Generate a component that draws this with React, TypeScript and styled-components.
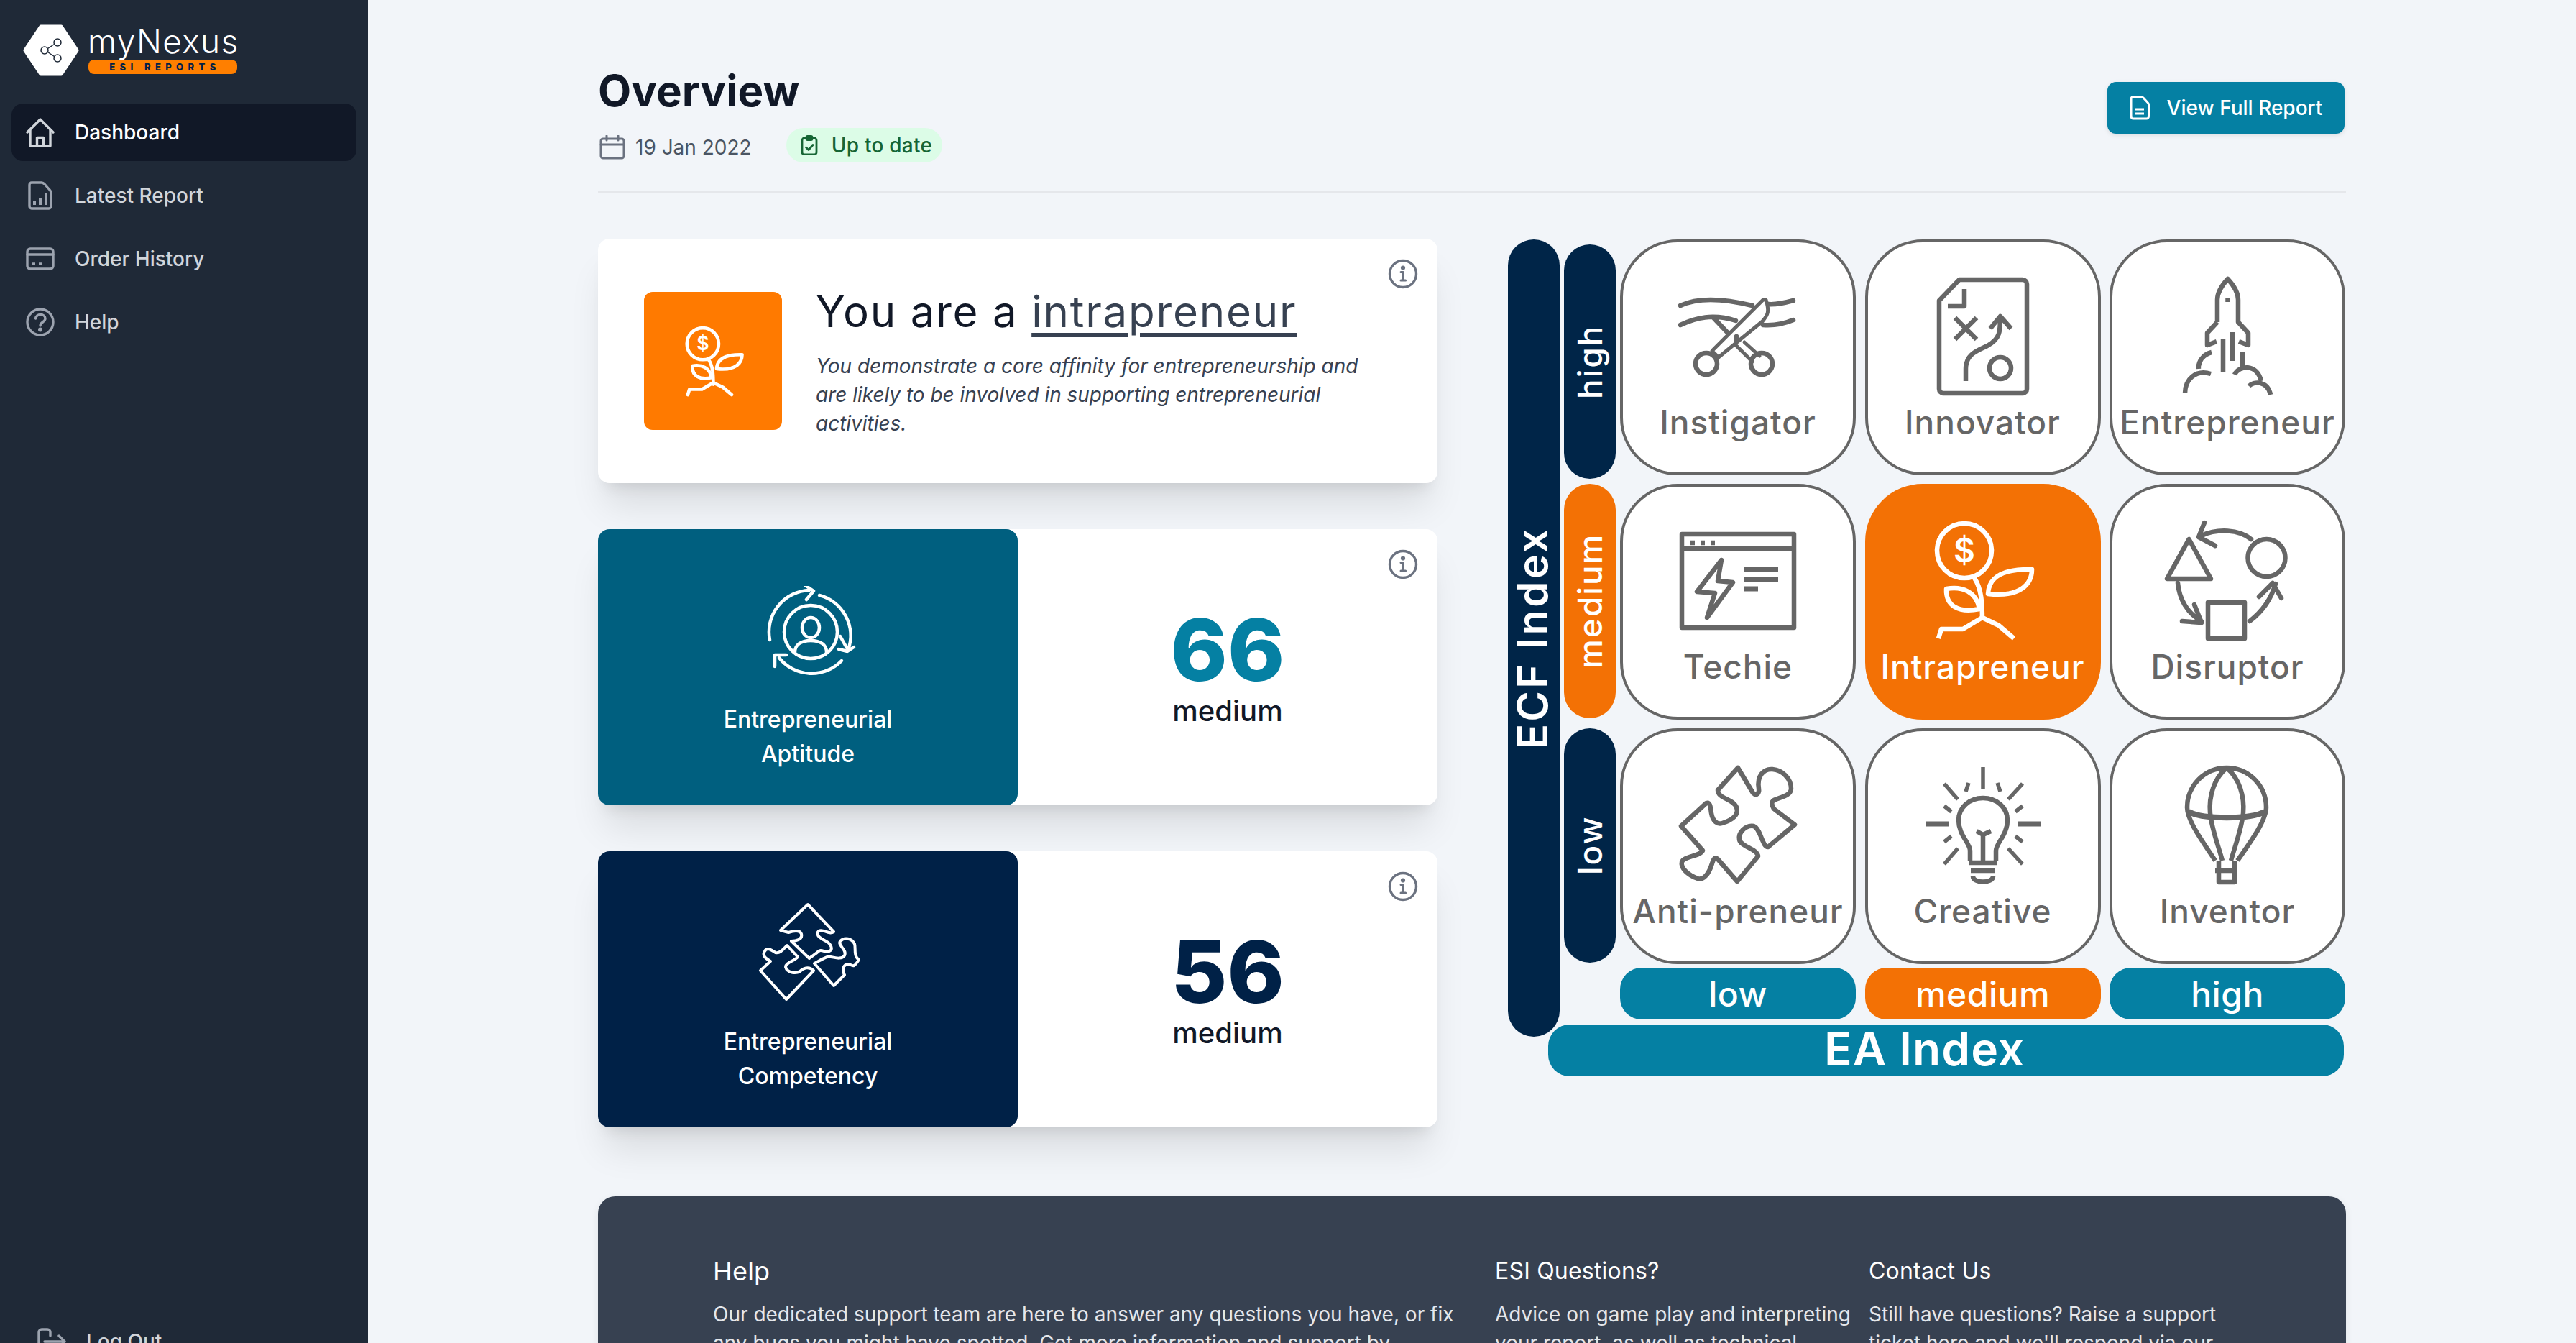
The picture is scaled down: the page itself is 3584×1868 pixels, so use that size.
import React from "react";
import styled, { createGlobalStyle } from "styled-components";

const Global = createGlobalStyle`
  html, body { margin: 0; padding: 0; height: 100%; overflow: hidden; background: #f2f5f9; }
  body { font-family: Inter, "Noto Sans", sans-serif; -webkit-font-smoothing: antialiased; }
  #root { height: 1868px; overflow: hidden; }
  * { box-sizing: border-box; }
`;

const Layout = styled.div`display: flex; height: 1868px; overflow: hidden;`;
const Sidebar = styled.aside`
  width: 512px; flex: none; height: 1886px; background: #1f2937;
  display: flex; flex-direction: column; padding: 34px 16px 0;
`;
const Logo = styled.div`display: flex; align-items: flex-start; gap: 12px; padding-left: 16px; height: 110px;`;
const LogoWords = styled.div`display: flex; flex-direction: column; width: 210px;`;
const LogoName = styled.div`
  font-size: 46px; font-weight: 300; line-height: 46px; color: #fff; letter-spacing: 1.4px; height: 49px; white-space: nowrap;
`;
const LogoTag = styled.div`
  height: 20px; width: 207px; margin-left: 1px; background: #ff7f00; border-radius: 8px; color: #002147; font-size: 13px; font-weight: 800;
  letter-spacing: 6.4px; line-height: 21px; text-align: center; white-space: pre; padding-left: 6px;
`;
const Nav = styled.nav`display: flex; flex-direction: column; gap: 8px;`;
const NavItem = styled.a<{ $active?: boolean }>`
  height: 80px; border-radius: 16px; display: flex; align-items: center; gap: 28px; padding-left: 20px;
  font-size: 28px; font-weight: 500; color: ${(p) => (p.$active ? "#fff" : "#d1d5db")};
  background: ${(p) => (p.$active ? "#111827" : "transparent")};
  svg { color: ${(p) => (p.$active ? "#d1d5db" : "#9ca3af")}; flex: none; }
`;
const LogOut = styled.a`
  margin-top: auto; display: flex; align-items: center; gap: 28px; padding-left: 36px; height: 40px;
  font-size: 28px; font-weight: 500; color: #d1d5db; svg { color: #9ca3af; flex: none; }
`;
const Main = styled.main`flex: 1; min-width: 0; padding: 90px 320px 0;`;
const Header = styled.header`
  display: flex; justify-content: space-between; align-items: flex-start; padding-bottom: 40px; border-bottom: 2px solid #e5e7eb;
`;
const Title = styled.h1`margin: 0; font-size: 60px; line-height: 72px; font-weight: 700; color: #111827;`;
const Meta = styled.div`display: flex; align-items: center; margin-top: 16px; height: 48px;`;
const DateText = styled.span`
  display: flex; align-items: center; gap: 14px; margin-left: 2px; font-size: 28px; color: #4b5563; padding-top: 5px;
  svg { color: #6b7280; }
`;
const Badge = styled.span`
  margin-left: 48px; height: 48px; border-radius: 24px; padding: 0 14px 0 20px; display: flex; align-items: center; gap: 19px;
  background: #dcfce7; color: #166534; font-size: 28px; font-weight: 500; letter-spacing: .25px;
`;
const ReportButton = styled.a`
  margin: 24px 2px 0 0; width: 330px; height: 72px; border-radius: 12px; background: #0580a3; color: #fff; display: flex; align-items: center;
  justify-content: center; gap: 24px; font-size: 28px; font-weight: 500; box-shadow: 0 2px 6px rgba(0,0,0,.1);
`;
const Columns = styled.div`display: flex; gap: 98px; margin-top: 64px;`;
const LeftColumn = styled.div`width: 1168px; flex: none; display: flex; flex-direction: column; gap: 64px;`;
const Card = styled.section`
  position: relative; background: #fff; border-radius: 16px; box-shadow: 0 40px 50px -10px rgba(0,0,0,.1), 0 16px 20px -12px rgba(0,0,0,.1);
`;
const InfoCorner = styled.span`position: absolute; top: 28px; right: 27px; display: flex; color: #6b7280;`;
const TypeCard = styled(Card)`height: 340px; display: flex; align-items: center; padding-left: 64px; gap: 47px;`;
const TypeIcon = styled.div`
  width: 192px; height: 192px; flex: none; background: #ff7a00; border-radius: 12px; color: #fff; display: flex; align-items: center; justify-content: center; padding-left: 6px;
`;
const TypeText = styled.div`padding-top: 6px; width: 770px;`;
const TypeTitle = styled.h2`margin: 0 0 24px; font-size: 60px; line-height: 64px; font-weight: 400; color: #111827; white-space: nowrap; letter-spacing: 1.8px;`;
const TypeLink = styled.a`color: #374151; text-decoration: underline; text-decoration-thickness: 6px; text-underline-offset: 8px;`;
const TypeDesc = styled.p`margin: 0; font-size: 28px; line-height: 40px; font-style: italic; color: #374151; letter-spacing: -.03px;`;
const ScoreCard = styled(Card)`height: 384px; display: flex;`;
const ScoreLeft = styled.div<{ $bg: string }>`
  width: 584px; flex: none; border-radius: 16px; background: ${(p) => p.$bg}; color: #fff; display: flex; flex-direction: column; align-items: center; padding-top: 76px;
`;
const ScoreIconBox = styled.div<{ $shiftX: number; $shiftY: number }>`
  height: 134px; display: flex; align-items: center; justify-content: center; margin-bottom: 31px;
  svg { transform: translate(${(p) => p.$shiftX}px, ${(p) => p.$shiftY}px); }
`;
const ScoreName = styled.div`font-size: 32px; line-height: 48px; font-weight: 500; text-align: center;`;
const ScoreRight = styled.div`flex: 1; display: flex; flex-direction: column; align-items: center; justify-content: center;`;
const ScoreValue = styled.div<{ $color: string }>`font-size: 120px; line-height: 120px; font-weight: 800; color: ${(p) => p.$color};`;
const ScoreLevel = styled.div`font-size: 40px; line-height: 48px; font-weight: 500; color: #111827; margin-top: 1px;`;

const Matrix = styled.div`display: flex; gap: 6px; align-items: flex-start; margin-top: 1px; width: 1166px; flex: none;`;
const EcfBar = styled.div`
  width: 72px; height: 1109px; flex: none; border-radius: 36px; background: #002548; color: #fff; display: flex; align-items: center; justify-content: center;
  font-size: 58px; font-weight: 600; writing-mode: vertical-rl; transform: rotate(180deg); white-space: nowrap; letter-spacing: 3.2px; padding-left: 4px;
`;
const MatrixBody = styled.div`display: flex; flex-direction: column; width: 1088px;`;
const Rows = styled.div`display: flex; flex-direction: column; gap: 12px;`;
const Row = styled.div`display: flex; gap: 6px; height: 328px;`;
const RowLabel = styled.div<{ $orange?: boolean; $drop?: number }>`
  width: 72px; height: 326px; flex: none; border-radius: 36px; margin-top: ${(p) => p.$drop ?? 0}px;
  background: ${(p) => (p.$orange ? "#f37105" : "#002548")}; color: #fff; display: flex; align-items: center; justify-content: center;
  font-size: 46px; font-weight: 500; writing-mode: vertical-rl; transform: rotate(180deg); letter-spacing: 2px;
`;
const Cells = styled.div`display: grid; grid-template-columns: repeat(3, 328px); column-gap: 12.5px;`;
const Cell = styled.div<{ $active?: boolean }>`
  height: 328px; border-radius: 80px; border: 4px solid ${(p) => (p.$active ? "#f37105" : "#666")};
  background: ${(p) => (p.$active ? "#f37105" : "#fff")}; color: ${(p) => (p.$active ? "#fff" : "#666")}; display: flex; flex-direction: column; align-items: center;
`;
const CellLabel = styled.div`font-size: 46px; line-height: 52px; font-weight: 500; white-space: nowrap; letter-spacing: 1px;`;
const GridIcon = styled.svg`
  display: block; width: 320px; height: 224px; flex: none; fill: none; stroke: currentColor; stroke-width: 6.5; stroke-linejoin: round;
`;
const Axis = styled.div`display: grid; grid-template-columns: repeat(3, 328px); column-gap: 12.5px; margin: 5px 0 0 78px;`;
const AxisLabel = styled.div<{ $orange?: boolean }>`
  height: 72px; border-radius: 30px; background: ${(p) => (p.$orange ? "#f37105" : "#0580a3")}; color: #fff;
  display: flex; align-items: center; justify-content: center; font-size: 48px; font-weight: 500; letter-spacing: .5px;
`;
const EaBar = styled.div`
  position: relative; margin: 7px 0 0 -22px; width: 1107px; height: 72px; border-radius: 30px; background: #0580a3; color: #fff;
  display: flex; align-items: center; justify-content: center; font-size: 64px; font-weight: 600; letter-spacing: 1px; padding: 0 60px 6px 0;
`;
const HelpPanel = styled.section`
  margin-top: 96px; background: #374151; border-radius: 24px 24px 0 0; padding: 82px 160px 0; height: 400px; color: #fff; box-shadow: 0 4px 12px rgba(0,0,0,.08);
  display: grid; grid-template-columns: 1072px 504px 504px; column-gap: 16px; align-items: start;
`;
const HelpHead = styled.h3<{ $large?: boolean }>`margin: 0 0 18px; height: 44px; font-size: ${(p) => (p.$large ? 36 : 32)}px; line-height: 44px; font-weight: 400; letter-spacing: .2px; color: #fff;`;
const HelpText = styled.p`margin: 0; font-size: 28px; line-height: 40px; color: #e5e7eb;`;

const StrokeSvg = styled.svg`fill: none; stroke: currentColor; stroke-linecap: round; stroke-linejoin: round; display: block;`;
const FillText = styled.text`fill: currentColor; stroke: none; font-family: Inter, sans-serif; font-weight: 600; text-anchor: middle;`;

const Info = () => (
  <InfoCorner>
    <StrokeSvg width={42} height={42} viewBox="0 0 42 42" strokeWidth={3.4}>
      <circle cx={21} cy={21} r={18.5} />
      <path d="M18 18.5h3.4v11.5M18 30h6.6" strokeWidth={3} />
      <circle cx={21} cy={12.5} r={1.4} fill="currentColor" />
    </StrokeSvg>
  </InfoCorner>
);

const HomeIcon = () => (
  <StrokeSvg width={40} height={42} viewBox="0 0 40 42" strokeWidth={3.4}>
    <path d="M2 21 20 3l18 18" /><path d="M6 18v22h28V18" /><path d="M15.5 40V28.5h9V40" />
  </StrokeSvg>
);
const ReportIcon = () => (
  <StrokeSvg width={40} height={40} viewBox="0 0 40 40" strokeWidth={3.4}>
    <path d="M8 2h14c2 0 3 1 4 2l7 8c1 1 2 2 2 4v19a3 3 0 0 1-3 3H8a3 3 0 0 1-3-3V5a3 3 0 0 1 3-3Z" />
    <path d="M12 33v-5M20 33V23M28 33V17" strokeWidth={4} strokeLinecap="butt" />
  </StrokeSvg>
);
const CardIcon = () => (
  <StrokeSvg width={40} height={40} viewBox="0 0 40 40" strokeWidth={3.4}>
    <rect x={2} y={6} width={36} height={28} rx={4} /><path d="M2 14h36" />
    <path d="M9 27h4M18 27h4" strokeWidth={3.6} strokeLinecap="butt" />
  </StrokeSvg>
);
const HelpIcon = () => (
  <StrokeSvg width={40} height={40} viewBox="0 0 40 40" strokeWidth={3.4}>
    <circle cx={20} cy={20} r={18} /><path d="M13.5 15c1-4 4-5.5 7-5.5 3.500 0 6.500 2.200 6.500 5.500 0 5-7 5-7 10" />
    <circle cx={20} cy={30.500} r={1.300} fill="currentColor" />
  </StrokeSvg>
);
const LogOutIcon = () => (
  <StrokeSvg width={40} height={40} viewBox="0 0 40 40" strokeWidth={3.4}>
    <path d="M18 28v5a4 4 0 0 1-4 4H6a4 4 0 0 1-4-4V7a4 4 0 0 1 4-4h8a4 4 0 0 1 4 4v5M10 20h28M30 12l8 8-8 8" />
  </StrokeSvg>
);
const CalendarIcon = () => (
  <StrokeSvg width={36} height={34} viewBox="0 0 36 34" strokeWidth={3}>
    <rect x={2} y={5} width={32} height={27} rx={3} /><path d="M10 1v6M26 1v6M2 13h32" />
  </StrokeSvg>
);
const ClipboardIcon = () => (
  <StrokeSvg width={24} height={28} viewBox="0 0 24 28" strokeWidth={2.8}>
    <rect x={2} y={4} width={20} height={23} rx={3} /><rect x={8} y={1.500} width={8} height={5} rx={1.500} /><path d="m7.500 17 3.500 3.500 6-7" />
  </StrokeSvg>
);
const DocIcon = () => (
  <StrokeSvg width={28} height={34} viewBox="0 0 28 34" strokeWidth={3}>
    <path d="M5 1.500h11c1 0 2 .5 3 1.500l6 6.500c1 1 1.500 2 1.500 3V29a3 3 0 0 1-3 3H5a3 3 0 0 1-3-3V4.500a3 3 0 0 1 3-3Z" />
    <path d="M8 19h12M8 25h12" strokeLinecap="butt" />
  </StrokeSvg>
);
const LogoMark = () => (
  <svg width={78} height={72} viewBox="0 0 78 72" style={{ flex: "none" }}>
    <path d="M25 3h28l22 33-22 33H25L3 36Z" fill="#fff" stroke="#fff" strokeWidth={5} strokeLinejoin="round" />
    <g fill="none" stroke="#1f2937" strokeWidth={1.500}>
      <circle cx={48} cy={25} r={5} /><circle cx={30} cy={36} r={5} /><circle cx={48} cy={47} r={5} />
      <path d="m34.500 33.500 9-6M34.500 38.500l9 6" />
    </g>
  </svg>
);

const SproutPaths = () => (
  <>
    <circle cx={138} cy={93} r={38} />
    <FillText x={138} y={109} fontSize={46}>$</FillText>
    <path d="M152 131c10 15 11 35 11 59" />
    <path d="M171 153c1-23 19-35 61-34 0 21-17 39-61 34Z" />
    <path d="M113 146c22-4 42 4 46 28-29 6-47-4-46-28Z" />
    <path d="M102 215l4-13h30l27-16 23 11 21 18" />
  </>
);
const AptitudeIcon = () => (
  <StrokeSvg width={128} height={128} viewBox="0 0 128 128" strokeWidth={4.500}>
    <path d="M7 75A58 58 0 0 1 62 6M56 -1 68 7l-10 12" />
    <path d="M76 7a58 58 0 0 1 40 76M114 80l-9-16M103 82l12 3 9-6" transform="translate(0 6)" />
    <path d="M107 104a58 58 0 0 1-87-4" />
    <path d="M14 112V96h16" />
    <circle cx={64} cy={64} r={37} />
    <ellipse cx={64} cy={58} rx={12} ry={14} />
    <path d="M42 92c0-10 8-16 22-16s22 6 22 16" />
  </StrokeSvg>
);
const CompetencyIcon = () => (
  <StrokeSvg width={142} height={137} viewBox="-2 -2 142 137" strokeWidth={4}>
    <path d="M67 1 103 39C96 44 88 34 82 38C76 44 88 50 92 52C100 56 102 64 97 66C92 70 86 62 82 66C78 70 74 72 69 76L44 52C50 52 60 50 58 42C56 36 46 38 40 40L29 37Z" />
    <path d="M1 93 37 133 75 93C68 86 60 90 56 94C50 98 38 96 36 88C36 82 48 80 53 74L38 58C34 62 28 70 22 68C16 64 10 60 7 66C3 72 8 76 15 80Z" />
    <path d="M76 83 103 114 118 99C114 92 116 84 124 84C130 86 130 90 138 78C130 72 134 62 132 56C128 48 118 46 112 52C108 58 122 64 118 72C112 80 100 72 94 74C88 76 82 80 76 83Z" />
  </StrokeSvg>
);

const box = "4 4 320 224";
const Instigator = () => (
  <GridIcon viewBox={box} strokeLinecap="round">
    <path d="M84 92c21-10 51-12 100 0M206 90c12 1 24-2 35-5M84 119c21-10 45-16 77-6M199 119c14 1 30-2 42-7M131 110l18 19" />
    <path d="M199 84h4c5 16 3 21-5 30l-61 50-9-9Z" strokeWidth={5} />
    <circle cx={120} cy={173} r={15} /><circle cx={197} cy={173} r={15} />
    <path d="m160 146 24 24M173 143l21 19" strokeWidth={5} />
    <path d="M162 135v6" />
  </GridIcon>
);
const Innovator = () => (
  <GridIcon viewBox={box}>
    <path d="M131 56h88a6 6 0 0 1 6 6v146a6 6 0 0 1-6 6H109a6 6 0 0 1-6-6V85Z" />
    <path d="M138 69v24h-23M125 109l30 30M155 109l-30 30M140 197v-17c0-20 15-25 30-32 18-10 18-20 18-40M174 124l14-17 15 17" />
    <circle cx={188} cy={179} r={15} />
  </GridIcon>
);
const Rocket = () => (
  <GridIcon viewBox={box} strokeWidth={5.500}>
    <path d="M150 115V84c0-12 8-22 14.500-29C171 62 179 72 179 84v31l14 15v17l-13-5M150 115l-14 15v17l13-5" />
    <path d="M164.500 81v6M158 139v46M171 129v40M185 156v26" />
    <path d="M105 214c0-19 15-34 36-27M142 157c-12 3-19 13-18 23M174 188c6-13 31-16 37 9M194 204c6-7 26-8 30 12" />
  </GridIcon>
);
const Techie = () => (
  <GridIcon viewBox={box}>
    <rect x={86} y={70} width={156} height={130} /><path d="M86 90h156M98 82h6M112 82h6M126 82h6" />
    <path d="M141 106 107 150l25 2-11 34 36-49-21-2Z" />
    <path d="M172 119h48M172 133h48M172 146h20" strokeWidth={7} />
  </GridIcon>
);
const Sprout = () => (
  <GridIcon viewBox={box} strokeWidth={5.500}><SproutPaths /></GridIcon>
);
const Disruptor = () => (
  <GridIcon viewBox={box} strokeLinecap="round">
    <path d="M110.500 77 80 132h61Z" /><circle cx={218.500} cy={103} r={26} />
    <rect x={137} y={165} width={51} height={50} />
    <path d="M197 77c-17-14-47-15-69-5M132 54l-8 20 23 12M95 138c2 22 13 42 33 53M101 191l27 2-10-25M195 191c17-13 30-31 36-52M208 157l19-19 12 21" />
  </GridIcon>
);
const Puzzle = () => (
  <GridIcon viewBox={box}>
    <path d="M164 55l21 35c5 5 9 0 8-6-3-18 7-28 19-27 14 1 26 13 26 27 0 10-16 12-24 16-5 3-2 8 0 12l29 22-37 31c-8 1-10-25-20-29-12-2-22 10-20 19 2 10 26 13 26 23l-29 35-27-31c-4-4-6 0-8 6-4 14-12 24-20 21-14-5-24-15-22-23 2-8 26-8 29-16l-30-34 35-32c6-2 6 8 7 14 2 12 9 16 15 14 14-4 24-12 20-22-4-12-26-12-26-24Z" />
  </GridIcon>
);
const Bulb = () => (
  <GridIcon viewBox={box}>
    <path d="M164 54v30M110 77l19 22M219 77l-20 22M144 76l-4 12M184 76l4 12M110 108l10 8M219 108l-10 8M110 158l10-8M219 158l-10-8M110 189l19-22M219 189l-20-22" strokeWidth={5.500} />
    <path d="M85 133h31M213 133h31" strokeWidth={7} />
    <path d="M146 184v-14c0-10-16-22-16-42 0-18 15-31 34-31s34 13 34 31c0 20-16 32-16 42v14" />
    <path d="m155 143 9 5 11-5M164 148v36M144 187h40M147 198h34M150 206c0 10 28 10 28 0" />
  </GridIcon>
);
const Balloon = () => (
  <GridIcon viewBox={box} strokeWidth={5.500}>
    <path d="M147 184c-12-19-39-54-39-74 0-30 24-55 55-55s55 25 55 55c0 20-27 55-40 74" />
    <path d="M110 116c20 11 86 11 106 0" strokeWidth={8} />
    <path d="M163 55c-18 15-25 40-23 63 2 22 12 47 17 66M163 55c18 15 25 40 23 63-2 22-12 47-17 66" />
    <path d="M147 198h31M152 184v30h22v-30" />
  </GridIcon>
);

const rows = [
  { label: "high", drop: 7, cells: [["Instigator", Instigator], ["Innovator", Innovator], ["Entrepreneur", Rocket]] },
  { label: "medium", orange: true, cells: [["Techie", Techie], ["Intrapreneur", Sprout, true], ["Disruptor", Disruptor]] },
  { label: "low", cells: [["Anti-preneur", Puzzle], ["Creative", Bulb], ["Inventor", Balloon]] },
] as const;

export default function App() {
  return (
    <>
      <Global />
      <Layout>
        <Sidebar>
          <Logo>
            <LogoMark />
            <LogoWords>
              <LogoName>myNexus</LogoName>
              <LogoTag>{"ESI REPORTS"}</LogoTag>
            </LogoWords>
          </Logo>
          <Nav>
            <NavItem $active><HomeIcon />Dashboard</NavItem>
            <NavItem><ReportIcon />Latest Report</NavItem>
            <NavItem><CardIcon />Order History</NavItem>
            <NavItem><HelpIcon />Help</NavItem>
          </Nav>
          <LogOut><LogOutIcon />Log Out</LogOut>
        </Sidebar>
        <Main>
          <Header>
            <div>
              <Title>Overview</Title>
              <Meta>
                <DateText><CalendarIcon />19 Jan 2022</DateText>
                <Badge><ClipboardIcon />Up to date</Badge>
              </Meta>
            </div>
            <ReportButton><DocIcon />View Full Report</ReportButton>
          </Header>
          <Columns>
            <LeftColumn>
              <TypeCard>
                <Info />
                <TypeIcon>
                  <StrokeSvg width={86} height={100} viewBox="95 48 145 172" strokeWidth={8}><SproutPaths /></StrokeSvg>
                </TypeIcon>
                <TypeText>
                  <TypeTitle>You are a <TypeLink>intrapreneur</TypeLink></TypeTitle>
                  <TypeDesc>You demonstrate a core affinity for entrepreneurship and are likely to be involved in supporting entrepreneurial activities.</TypeDesc>
                </TypeText>
              </TypeCard>
              <ScoreCard>
                <Info />
                <ScoreLeft $bg="#005f7f">
                  <ScoreIconBox $shiftX={4} $shiftY={0}><AptitudeIcon /></ScoreIconBox>
                  <ScoreName>Entrepreneurial<br />Aptitude</ScoreName>
                </ScoreLeft>
                <ScoreRight>
                  <ScoreValue $color="#0580a3">66</ScoreValue>
                  <ScoreLevel>medium</ScoreLevel>
                </ScoreRight>
              </ScoreCard>
              <ScoreCard>
                <Info />
                <ScoreLeft $bg="#002147">
                  <ScoreIconBox $shiftX={2} $shiftY={-4}><CompetencyIcon /></ScoreIconBox>
                  <ScoreName>Entrepreneurial<br />Competency</ScoreName>
                </ScoreLeft>
                <ScoreRight>
                  <ScoreValue $color="#002147">56</ScoreValue>
                  <ScoreLevel>medium</ScoreLevel>
                </ScoreRight>
              </ScoreCard>
            </LeftColumn>
            <Matrix>
              <EcfBar>ECF Index</EcfBar>
              <MatrixBody>
                <Rows>
                  {rows.map((r) => (
                    <Row key={r.label}>
                      <RowLabel $orange={"orange" in r} $drop={"drop" in r ? r.drop : 0}>{r.label}</RowLabel>
                      <Cells>
                        {r.cells.map((c) => {
                          const Icon = c[1];
                          return (
                            <Cell key={c[0]} $active={c.length > 2}>
                              <Icon />
                              <CellLabel>{c[0]}</CellLabel>
                            </Cell>
                          );
                        })}
                      </Cells>
                    </Row>
                  ))}
                </Rows>
                <Axis>
                  <AxisLabel>low</AxisLabel>
                  <AxisLabel $orange>medium</AxisLabel>
                  <AxisLabel>high</AxisLabel>
                </Axis>
                <EaBar>EA Index</EaBar>
              </MatrixBody>
            </Matrix>
          </Columns>
          <HelpPanel>
            <div>
              <HelpHead $large>Help</HelpHead>
              <HelpText>Our dedicated support team are here to answer any questions you have, or fix any bugs you might have spotted. Get more information and support by</HelpText>
            </div>
            <div>
              <HelpHead>ESI Questions?</HelpHead>
              <HelpText>Advice on game play and interpreting your report, as well as technical</HelpText>
            </div>
            <div>
              <HelpHead>Contact Us</HelpHead>
              <HelpText>Still have questions? Raise a support ticket here and we'll respond via our</HelpText>
            </div>
          </HelpPanel>
        </Main>
      </Layout>
    </>
  );
}
